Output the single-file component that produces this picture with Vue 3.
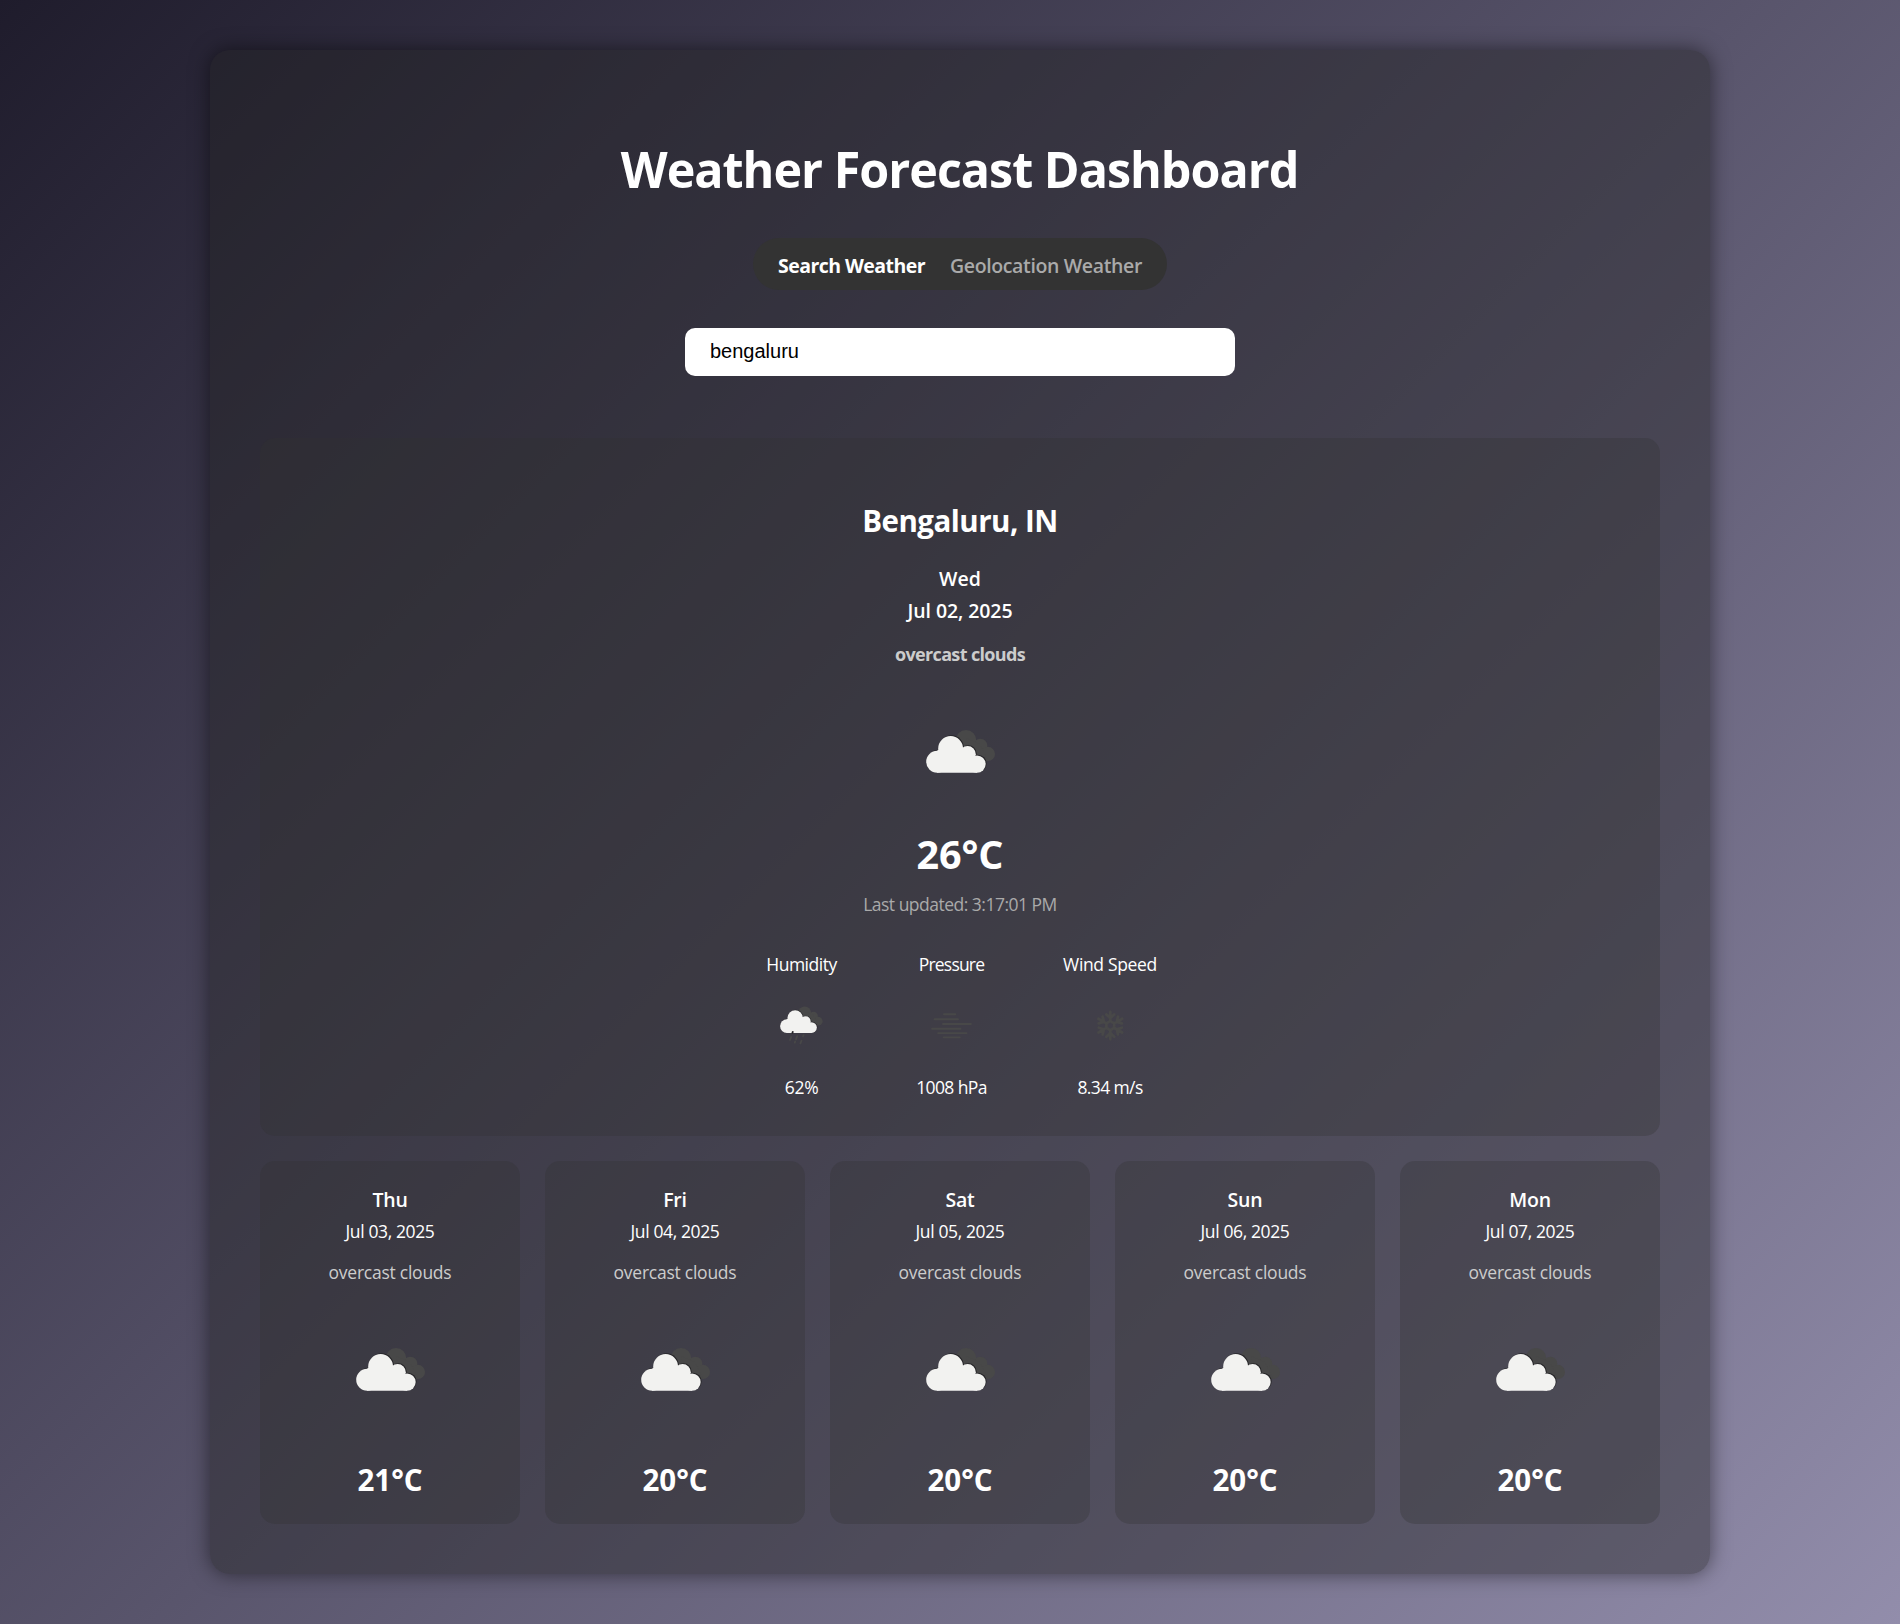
<script setup>
import { ref } from 'vue'

const query = ref('bengaluru')

const days = [
  { day: 'Thu', date: 'Jul 03, 2025', text: 'overcast clouds', temp: 21 },
  { day: 'Fri', date: 'Jul 04, 2025', text: 'overcast clouds', temp: 20 },
  { day: 'Sat', date: 'Jul 05, 2025', text: 'overcast clouds', temp: 20 },
  { day: 'Sun', date: 'Jul 06, 2025', text: 'overcast clouds', temp: 20 },
  { day: 'Mon', date: 'Jul 07, 2025', text: 'overcast clouds', temp: 20 },
]

const arms = [0, 60, 120, 180, 240, 300]
</script>

<template>
  <div class="page">
    <!-- shared cloud shapes -->
    <svg class="defs" width="0" height="0">
      <defs>
        <g id="cloud-front">
          <circle cx="27.2" cy="61.8" r="11" />
          <circle cx="40.6" cy="48.4" r="12.4" />
          <circle cx="57.6" cy="54.2" r="8.2" />
          <circle cx="67" cy="64.1" r="8.7" />
          <path d="M27 50.8 L41 42 L58 50 L67 58 V72.8 H27 Z" />
        </g>
        <g id="cloud-back">
          <circle cx="56" cy="40.2" r="10.3" />
          <circle cx="70.4" cy="45.6" r="6.9" />
          <circle cx="77.9" cy="53.9" r="7.1" />
          <path d="M56 38 L70 44 L78 61 L62 58 Z" />
        </g>
        <g id="clouds">
          <use href="#cloud-back" fill="#484848" />
          <use href="#cloud-front" x="0.9" y="-0.7" fill="#262528" />
          <use href="#cloud-front" fill="#f2f2f0" />
        </g>
      </defs>
    </svg>

    <main class="container">
      <h1 class="title">Weather Forecast Dashboard</h1>

      <nav class="tabs">
        <span class="tab active">Search Weather</span>
        <span class="tab">Geolocation Weather</span>
      </nav>

      <input v-model="query" class="search" type="text" spellcheck="false" />

      <section class="current">
        <h2 class="city">Bengaluru, IN</h2>
        <p class="now-date">Wed</p>
        <p class="now-date full">Jul 02, 2025</p>
        <p class="now-text">overcast clouds</p>
        <svg class="icon" viewBox="0 0 100 100"><use href="#clouds" /></svg>
        <p class="now-temp">26°C</p>
        <p class="updated">Last updated: 3:17:01 PM</p>

        <div class="stats">
          <div class="stat">
            <p class="label humidity">Humidity</p>
            <svg class="stat-icon" viewBox="0 0 100 100">
              <use href="#clouds" transform="translate(-3.2 -11.8) scale(1.03)" />
              <g stroke="#484848" stroke-width="3" stroke-linecap="round">
                <path d="M34.6 61.5 L34 63" stroke="#262528" />
                <path d="M32 70 L30 75" />
                <path d="M42 68.5 L40 74" />
                <path d="M52.6 67 L51.8 69" />
                <path d="M38.7 77.5 L38 79.3" />
                <path d="M49.2 76 L47.4 80.6" />
              </g>
            </svg>
            <p class="value percent">62%</p>
          </div>
          <div class="stat">
            <p class="label pressure">Pressure</p>
            <svg class="stat-icon" viewBox="0 0 100 100">
              <path
                d="M36.5 32.2H55.5M21 40.5H60M35 48.3H81.5M17 56.3H64M27 63.6H74M36 70.6H63"
                stroke="#484848" stroke-width="3.2" stroke-linecap="round" fill="none"
              />
            </svg>
            <p class="value">1008 hPa</p>
          </div>
          <div class="stat wind">
            <p class="label wind-label">Wind Speed</p>
            <svg class="stat-icon" viewBox="0 0 100 100">
              <g transform="translate(50.5 51)" stroke="#484848" stroke-width="4.6" stroke-linecap="round" fill="none">
                <path
                  v-for="a in arms" :key="a" :transform="`rotate(${a})`"
                  d="M0 -7.5V-22.8M0 -12.5L-6.5 -18.5M0 -12.5L6.5 -18.5M0 -7.5L6.5 -3.75"
                />
              </g>
            </svg>
            <p class="value">8.34 m/s</p>
          </div>
        </div>
      </section>

      <section class="forecast">
        <article v-for="d in days" :key="d.day" class="card">
          <h3 class="day">{{ d.day }}</h3>
          <p class="date">{{ d.date }}</p>
          <p class="text">{{ d.text }}</p>
          <svg class="icon card-icon" viewBox="0 0 100 100"><use href="#clouds" /></svg>
          <p class="temp">{{ d.temp }}°C</p>
        </article>
      </section>
    </main>
  </div>
</template>

<style>
body {
  margin: 0;
}
</style>

<style scoped>
.page {
  box-sizing: border-box;
  min-height: 1624px;
  padding: 50px 190px 50px 210px;
  background: linear-gradient(135deg, #1f1c2c, #928dab);
  font-family: "Open Sans", "Noto Sans", sans-serif;
  color: #fff;
}

.defs {
  position: absolute;
}

.container {
  box-sizing: border-box;
  display: flex;
  flex-direction: column;
  align-items: center;
  width: 1500px;
  height: 1524px;
  padding: 50px;
  border-radius: 20px;
  background: rgba(33, 33, 33, 0.42);
  box-shadow: 0 0 20px rgba(0, 0, 0, 0.5);
}

h1, h2, h3, p {
  margin: 0;
  white-space: nowrap;
}

.title {
  margin-top: 38px;
  font-size: 51px;
  line-height: 60px;
  font-weight: 700;
  letter-spacing: -1.05px;
  transform: scaleX(0.95);
}

.tabs {
  box-sizing: border-box;
  display: flex;
  justify-content: space-between;
  width: 414px;
  height: 52px;
  margin-top: 40px;
  padding: 3px 25px 0 25px;
  border-radius: 26px;
  background: #333;
}

.tab {
  font-size: 19.5px;
  line-height: 50px;
  font-weight: 600;
  letter-spacing: -0.36px;
  color: #aaa;
}

.tab.active {
  font-weight: 700;
  letter-spacing: -0.54px;
  color: #fff;
}

.search {
  box-sizing: border-box;
  width: 550px;
  height: 48px;
  margin-top: 38px;
  padding: 0 25px 2px;
  border: 0;
  border-radius: 10px;
  background: #fff;
  color: #000;
  font: 20px "Liberation Sans", Arial, sans-serif;
}

.current {
  box-sizing: border-box;
  display: flex;
  flex-direction: column;
  align-items: center;
  width: 1400px;
  height: 698px;
  margin-top: 62px;
  padding-top: 63px;
  border-radius: 15px;
  background: rgba(50, 50, 50, 0.3);
}

.city {
  font-size: 29.5px;
  line-height: 40px;
  font-weight: 700;
  letter-spacing: -0.5px;
}

.now-date {
  margin-top: 22px;
  font-size: 19.5px;
  line-height: 32px;
  font-weight: 600;
}

.now-date.full {
  margin-top: 0;
  letter-spacing: -0.08px;
}

.now-text {
  margin-top: 11px;
  font-size: 18px;
  line-height: 32px;
  font-weight: 700;
  letter-spacing: -0.64px;
  color: #ccc;
}

.icon {
  display: block;
  width: 100px;
  height: 100px;
  margin-top: 30px;
}

.now-temp {
  margin-top: 24px;
  font-size: 39.5px;
  line-height: 60px;
  font-weight: 700;
  letter-spacing: -0.1px;
}

.updated {
  margin-top: 6px;
  font-size: 17.5px;
  line-height: 28px;
  letter-spacing: -0.51px;
  color: #aaa;
}

.stats {
  display: flex;
  gap: 70px;
  margin-top: 32px;
}

.stat {
  display: flex;
  flex-direction: column;
  align-items: center;
  width: 80px;
}

.stat.wind {
  width: 97px;
}

.label,
.value {
  font-size: 17.5px;
  line-height: 28px;
  letter-spacing: -0.61px;
}

.humidity {
  letter-spacing: -0.48px;
}

.pressure {
  letter-spacing: -0.8px;
}

.wind-label {
  letter-spacing: -0.34px;
}

.percent {
  letter-spacing: -0.26px;
}

.stat-icon {
  display: block;
  width: 60px;
  height: 60px;
  margin: 17px 0 18px;
}

.forecast {
  display: flex;
  gap: 25px;
  margin-top: 25px;
}

.card {
  box-sizing: border-box;
  display: flex;
  flex-direction: column;
  align-items: center;
  width: 260px;
  height: 363px;
  padding-top: 24px;
  border-radius: 15px;
  background: rgba(50, 50, 50, 0.3);
}

.day {
  font-size: 19.5px;
  line-height: 30px;
  font-weight: 600;
  letter-spacing: -0.2px;
}

.date {
  margin-top: 1px;
  font-size: 17.5px;
  line-height: 30px;
  letter-spacing: -0.38px;
}

.text {
  margin-top: 11px;
  font-size: 17.5px;
  line-height: 30px;
  letter-spacing: -0.25px;
  color: #ccc;
}

.card-icon {
  margin-top: 31px;
}

.temp {
  margin-top: 42px;
  font-size: 29.5px;
  line-height: 40px;
  font-weight: 700;
}
</style>
